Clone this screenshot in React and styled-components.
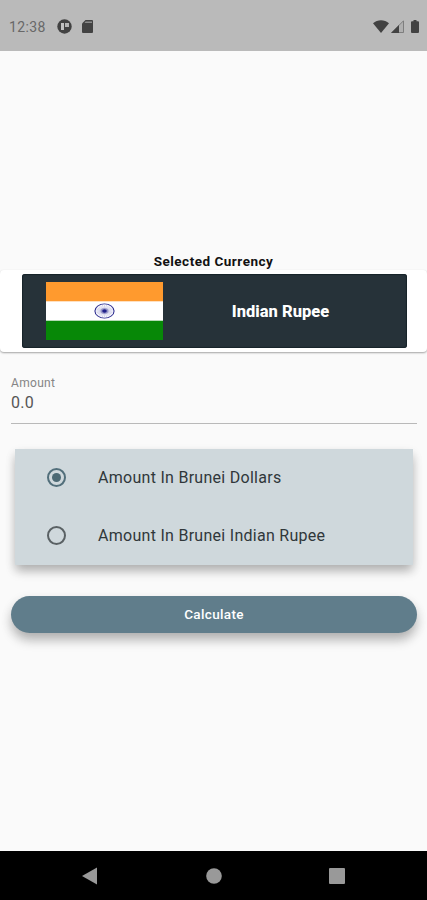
import { useState } from "react";
import styled, { createGlobalStyle } from "styled-components";

const GlobalStyle = createGlobalStyle`
  * {
    box-sizing: border-box;
  }
  body {
    margin: 0;
    font-family: Roboto, sans-serif;
  }
`;

const Screen = styled.div`
  display: flex;
  flex-direction: column;
  width: 100%;
  height: 900px;
  background: #fafafa;
  overflow: hidden;
`;

const StatusBar = styled.header`
  display: flex;
  align-items: center;
  justify-content: space-between;
  height: 51px;
  padding: 2px 8px 0 9px;
  background: #bababa;
  flex-shrink: 0;
`;

const StatusGroup = styled.div`
  display: flex;
  align-items: center;
`;

const Clock = styled.span`
  width: 48px;
  color: #686868;
  font-size: 14px;
  letter-spacing: 0.35px;
  line-height: 18px;
`;

const StatusIcon = styled.svg`
  display: block;
  margin-left: ${(props) => props.$gap || 0}px;
  fill: #424242;
`;

const Content = styled.main`
  flex: 1;
  padding-top: 202px;
`;

const Heading = styled.h1`
  height: 17px;
  margin: 0;
  color: #111;
  font-size: 13.5px;
  font-weight: 700;
  letter-spacing: 0.5px;
  line-height: 17px;
  text-align: center;
`;

const CurrencyCard = styled.section`
  height: 82px;
  padding: 4px 20px 4px 22px;
  background: #fff;
  border-radius: 4px;
  box-shadow: 0 1px 2px rgba(0, 0, 0, 0.35);
`;

const CurrencyPanel = styled.div`
  display: flex;
  align-items: center;
  height: 74px;
  padding-left: 24px;
  background: #263239;
  border-radius: 3px;
  box-shadow: inset 0 0 1px 1px #17232a;
`;

const Flag = styled.svg`
  display: block;
  width: 117px;
  height: 58px;
`;

const CurrencyName = styled.span`
  flex: 1;
  padding-right: 9px;
  color: #fff;
  font-size: 16.5px;
  font-weight: 800;
  text-align: center;
`;

const Field = styled.label`
  display: block;
  height: 48px;
  margin: 24px 10px 0 11px;
  border-bottom: 1px solid #b9b9b9;
`;

const FieldLabel = styled.span`
  display: block;
  color: #858585;
  font-size: 12px;
  letter-spacing: 0.32px;
  line-height: 14px;
`;

const FieldInput = styled.input`
  display: block;
  width: 100%;
  height: 22px;
  margin-top: 1px;
  padding: 0;
  border: 0;
  outline: 0;
  background: transparent;
  color: #555;
  font-family: inherit;
  font-size: 16px;
  letter-spacing: 0.3px;
`;

const Options = styled.div`
  height: 116px;
  margin: 25px 14px 0 15px;
  background: #cfd8dc;
  box-shadow: 0 7px 10px -1px rgba(0, 0, 0, 0.24), 0 4px 10px rgba(0, 0, 0, 0.1);
`;

const Option = styled.button`
  display: flex;
  align-items: center;
  width: 100%;
  height: 58px;
  padding: 0 0 1px 32px;
  border: 0;
  background: transparent;
  color: #30373a;
  font-family: inherit;
  font-size: 16px;
  letter-spacing: 0.28px;
  text-align: left;
`;

const Radio = styled.span`
  display: flex;
  align-items: center;
  justify-content: center;
  width: 19px;
  height: 19px;
  margin-right: 32px;
  border: 2px solid ${(props) => (props.$checked ? "#526f7b" : "#5a6164")};
  border-radius: 50%;

  &::after {
    content: "";
    width: 9px;
    height: 9px;
    border-radius: 50%;
    background: ${(props) => (props.$checked ? "#4c6974" : "transparent")};
  }
`;

const CalculateButton = styled.button`
  display: block;
  width: calc(100% - 21px);
  height: 37px;
  margin: 31px 10px 0 11px;
  padding: 0 0 2px;
  border: 0;
  border-radius: 19px;
  background: #607d8b;
  box-shadow: 0 8px 12px -1px rgba(0, 0, 0, 0.24), 0 4px 12px rgba(0, 0, 0, 0.1);
  color: #fff;
  font-family: inherit;
  font-size: 13.5px;
  font-weight: 500;
  letter-spacing: 0.35px;
`;

const NavBar = styled.nav`
  display: grid;
  grid-template-columns: repeat(3, 123px);
  justify-content: center;
  align-items: center;
  justify-items: center;
  height: 49px;
  background: #000;
  flex-shrink: 0;
`;

const NavIcon = styled.svg`
  display: block;
  width: 18px;
  height: 18px;
  fill: #999;
`;

const options = ["Amount In Brunei Dollars", "Amount In Brunei Indian Rupee"];

function IndianFlag() {
  const spokes = Array.from({ length: 12 }, (_, i) => i * 15);
  return (
    <Flag viewBox="0 0 117 58" preserveAspectRatio="none">
      <rect width="117" height="58" fill="#fff" />
      <rect width="117" height="19.3" fill="#ff9a2e" />
      <rect y="38.7" width="117" height="19.3" fill="#078807" />
      <g transform="translate(58.5 29) scale(1.33 1)" stroke="#27278c">
        <circle r="7.2" fill="#fafaff" strokeWidth="0.8" />
        {spokes.map((angle) => (
          <path
            key={angle}
            d="M-6.2 0H6.2"
            strokeWidth="0.14"
            transform={`rotate(${angle})`}
          />
        ))}
        <circle r="3" fill="#27278c" fillOpacity="0.3" stroke="none" />
        <circle r="1.7" fill="#20208a" stroke="none" />
      </g>
    </Flag>
  );
}

export default function App() {
  const [amount, setAmount] = useState("0.0");
  const [selected, setSelected] = useState(0);

  return (
    <>
      <GlobalStyle />
      <Screen>
        <StatusBar>
          <StatusGroup>
            <Clock>12:38</Clock>
            <StatusIcon width="15" height="15" viewBox="0 0 15 15">
              <circle cx="7.5" cy="7.5" r="7.2" />
              <path d="M4 4h3v7H4z" fill="#c2c2c2" />
              <path d="M8 4h4v4H8z" fill="#b5b5b5" />
            </StatusIcon>
            <StatusIcon $gap={10} width="11" height="13" viewBox="0 0 11 13">
              <path d="M3.5 0H10a1 1 0 0 1 1 1v11a1 1 0 0 1-1 1H1a1 1 0 0 1-1-1V3.5z" />
              <path d="M3.5 1.5H10v1.4H2.5z" fill="#8b8b8b" />
            </StatusIcon>
          </StatusGroup>
          <StatusGroup>
            <StatusIcon width="16" height="13" viewBox="0 0 16 13">
              <path d="M0 3.2C4.5-.8 11.5-.8 16 3.2L8 13z" />
            </StatusIcon>
            <StatusIcon $gap={2} width="13" height="13" viewBox="0 0 13 13">
              <path d="M.8 12.5 12.5.8v11.7z" fill="#b0b0b0" stroke="#777" strokeWidth=".9" />
              <path d="M0 13 8 5v8z" />
            </StatusIcon>
            <StatusIcon $gap={7} width="8" height="13" viewBox="0 0 8 13">
              <path d="M2.5 0h3v1.3H7a1 1 0 0 1 1 1V12a1 1 0 0 1-1 1H1a1 1 0 0 1-1-1V2.3a1 1 0 0 1 1-1h1.5z" />
            </StatusIcon>
          </StatusGroup>
        </StatusBar>

        <Content>
          <Heading>Selected Currency</Heading>
          <CurrencyCard>
            <CurrencyPanel>
              <IndianFlag />
              <CurrencyName>Indian Rupee</CurrencyName>
            </CurrencyPanel>
          </CurrencyCard>

          <Field>
            <FieldLabel>Amount</FieldLabel>
            <FieldInput
              value={amount}
              onChange={(e) => setAmount(e.target.value)}
            />
          </Field>

          <Options role="radiogroup">
            {options.map((text, index) => (
              <Option
                key={text}
                role="radio"
                aria-checked={selected === index}
                onClick={() => setSelected(index)}
              >
                <Radio $checked={selected === index} />
                {text}
              </Option>
            ))}
          </Options>

          <CalculateButton>Calculate</CalculateButton>
        </Content>

        <NavBar>
          <NavIcon viewBox="0 0 18 18">
            <path d="M0 9 15 .5v17z" />
          </NavIcon>
          <NavIcon viewBox="0 0 18 18">
            <circle cx="9" cy="9" r="7.8" />
          </NavIcon>
          <NavIcon viewBox="0 0 18 18">
            <rect x="1" y="1" width="16" height="16" rx="1" />
          </NavIcon>
        </NavBar>
      </Screen>
    </>
  );
}
